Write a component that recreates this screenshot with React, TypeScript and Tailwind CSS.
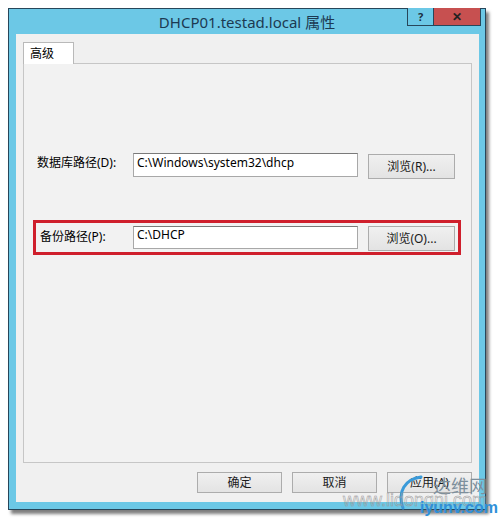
import React from "react";

const cjk = { fontFamily: '"Noto Sans", "Noto Sans CJK SC", sans-serif' };

function Btn({ label, w, h }: { label: string; w: number; h: number }) {
  return (
    <div
      className="flex items-center justify-center border border-[#acacac] bg-[linear-gradient(#f0f0f0,#e3e3e3)] text-[12px] text-[#1a1a1a] leading-none"
      style={{ width: w, height: h }}
    >
      {label}
    </div>
  );
}

export default function App() {
  return (
    <div className="relative w-[499px] h-[522px] bg-white overflow-hidden" style={cjk}>
      <div className="ml-[8px] mt-[8px] w-[478px] h-[502px] border border-[#27465a] bg-[#6cc8e6] shadow-[3px_4px_3px_rgba(0,0,0,0.5)] flex flex-col">
        {/* title bar */}
        <div className="relative h-[25px] flex items-center justify-center shrink-0">
          <span className="text-[15px] text-[#1c3a52] leading-none mt-[2px]">DHCP01.testad.local 属性</span>
          <div className="absolute right-[4px] top-[-1px] flex h-[18px]">
            <div className="w-[27px] h-full border border-[#27465a] border-t-0 bg-[#6cc8e6] flex items-center justify-center text-[11px] font-bold text-[#1c2e40] leading-none">?</div>
            <div className="w-[47px] h-full border border-[#27465a] border-t-0 border-l-0 bg-[#c75050] flex items-center justify-center text-[12px] font-bold text-[#222] leading-none">✕</div>
          </div>
        </div>
        {/* content */}
        <div className="ml-[7px] mr-[6px] mb-[7px] flex-1 bg-[#f0f0f0] flex flex-col">
          <div className="ml-[7px] mt-[8px] flex flex-col">
            <div className="relative z-10 w-[51px] h-[22px] border border-[#b9b9b9] border-b-0 bg-white flex items-center pl-[6px] text-[12px] text-black leading-none">
              高级
            </div>
            <div className="-mt-[1px] w-[449px] h-[400px] border border-[#c6c6c6] bg-[#f2f2f2] flex flex-col">
              {/* row 1 */}
              <div className="mt-[89px] flex items-start">
                <div className="ml-[13px] w-[96px] pt-[4px] text-[12px] text-black leading-none">数据库路径(D):</div>
                <div className="w-[225px] h-[24px] border border-[#a8a8a8] border-t-[#7a7a7a] bg-white pl-[3px] pt-[3px] text-[12px] leading-none text-black">
                  C:\Windows\system32\dhcp
                </div>
                <div className="ml-[10px] mt-[1px]">
                  <Btn label="浏览(R)..." w={87} h={25} />
                </div>
              </div>
              {/* row 2 (highlighted) */}
              <div className="mt-[41px] ml-[9px] w-[428px] h-[35px] border-[3px] border-[#cf1f2c] flex items-start pt-[3px]">
                <div className="ml-[4px] w-[93px] pt-[5px] text-[12px] text-black leading-none">备份路径(P):</div>
                <div className="w-[225px] h-[23px] border border-[#a8a8a8] border-t-[#7a7a7a] bg-white pl-[3px] pt-[2px] text-[12px] leading-none text-black">
                  C:\DHCP
                </div>
                <div className="ml-[10px]">
                  <Btn label="浏览(O)..." w={87} h={25} />
                </div>
              </div>
            </div>
          </div>
          <div className="mt-[9px] ml-[181px] flex gap-[10px]">
            <Btn label="确定" w={85} h={21} />
            <Btn label="取消" w={85} h={21} />
            <Btn label="应用(A)" w={85} h={21} />
          </div>
        </div>
      </div>

      {/* watermark overlay */}
      <svg className="absolute left-[395px] top-[474px] pointer-events-none" width="30" height="40" viewBox="0 0 30 40">
        <path d="M26 3 C10 5 2 18 8 34" fill="none" stroke="#3a9ad9" strokeWidth="3" strokeLinecap="round" />
      </svg>
      <span className="absolute left-[433px] top-[477px] text-[18px] leading-none text-[#7d8f9c] pointer-events-none">
        达维网
      </span>
      <span className="absolute left-[343px] top-[491px] text-[18px] leading-none text-transparent pointer-events-none" style={{ WebkitTextStroke: "0.5px #9a9a9a", fontFamily: '"Liberation Sans", sans-serif' }}>
        www.lidongni.com
      </span>
      <span className="absolute left-[420px] top-[500px] text-[16px] font-bold leading-none text-[#2f8fd8] pointer-events-none" style={{ fontFamily: '"Liberation Sans", sans-serif' }}>
        iyunv.com
      </span>
    </div>
  );
}
